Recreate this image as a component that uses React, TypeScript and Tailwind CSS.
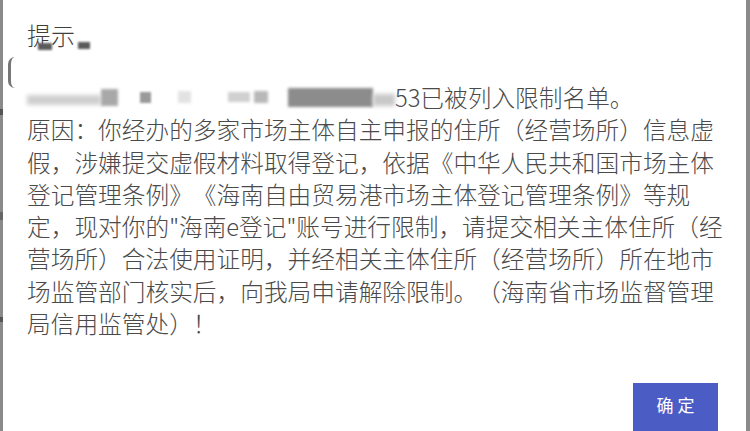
import React from "react";

const lines = [
  "原因：你经办的多家市场主体自主申报的住所（经营场所）信息虚",
  "假，涉嫌提交虚假材料取得登记，依据《中华人民共和国市场主体",
  "登记管理条例》《海南自由贸易港市场主体登记管理条例》等规",
  "定，现对你的\"海南e登记\"账号进行限制，请提交相关主体住所（经",
  "营场所）合法使用证明，并经相关主体住所（经营场所）所在地市",
  "场监管部门核实后，向我局申请解除限制。（海南省市场监督管理",
  "局信用监管处）！",
];

export default function App() {
  return (
    <div
      className="w-[750px] h-[431px] bg-white flex overflow-hidden text-[#4a4a4a] [text-spacing-trim:space-all]"
      style={{ fontFamily: '"Noto Sans CJK SC", "Noto Sans", sans-serif' }}
    >
      <div className="w-[3px] bg-[#8a8a8a] flex flex-col justify-around py-[60px]">
        <span className="h-[6px] bg-[#555]" />
        <span className="h-[8px] bg-[#666]" />
        <span className="h-[5px] bg-[#555]" />
      </div>
      <div className="flex-1 flex flex-col">
        <div className="relative pl-[24px] pt-[19px] text-[24px] leading-[32px] font-light text-[#3f3f3f]">
          <span>提示</span>
          <span className="absolute left-[35px] top-[43px] w-[14px] h-[7px] bg-[#5a5a5a] blur-[1px]" />
          <span className="absolute left-[75px] top-[42px] w-[12px] h-[7px] bg-[#5a5a5a] blur-[1px]" />
          <span className="absolute left-[5px] top-[57px] w-[7px] h-[31px] border-l-[3px] border-[#777] rounded-l-full" />
        </div>
        <div className="pl-[24px] mt-[30px] text-[23.7px] leading-[32.3px] whitespace-nowrap font-light">
          <div className="flex items-center">
            <span className="inline-block w-[74px] h-[10px] mt-[6px] bg-[#cfcfcf] blur-[2px]" />
            <span className="inline-block w-[17px] h-[17px] bg-[#a8a8a8] blur-[1.5px]" />
            <span className="inline-block w-[22px]" />
            <span className="inline-block w-[11px] h-[11px] bg-[#9a9a9a] blur-[1px]" />
            <span className="inline-block w-[27px]" />
            <span className="inline-block w-[13px] h-[12px] bg-[#e2e2e2] blur-[1.5px]" />
            <span className="inline-block w-[37px]" />
            <span className="inline-block w-[22px] h-[10px] bg-[#d0d0d0] blur-[1.5px]" />
            <span className="inline-block w-[4px]" />
            <span className="inline-block w-[14px] h-[12px] bg-[#b8b8b8] blur-[1.5px]" />
            <span className="inline-block w-[20px]" />
            <span className="inline-block w-[85px] h-[19px] bg-[#8c8c8c] blur-[1.5px]" />
            <span className="inline-block w-[22px] h-[12px] mt-[6px] bg-[#c8c8c8] blur-[2px]" />
            <span>53已被列入限制名单。</span>
          </div>
          {lines.map((l, i) => (
            <div key={i}>{l}</div>
          ))}
        </div>
        <div className="flex justify-end pr-[28px] mt-auto">
          <button className="w-[85px] h-[56px] mb-[-8px] bg-[#4b5cc4] text-white text-[17px] tracking-[4px] pl-[4px] flex items-start justify-center pt-[9px]">
            确定
          </button>
        </div>
      </div>
      <div className="w-[4px] bg-[#8a8a8a]" />
    </div>
  );
}
